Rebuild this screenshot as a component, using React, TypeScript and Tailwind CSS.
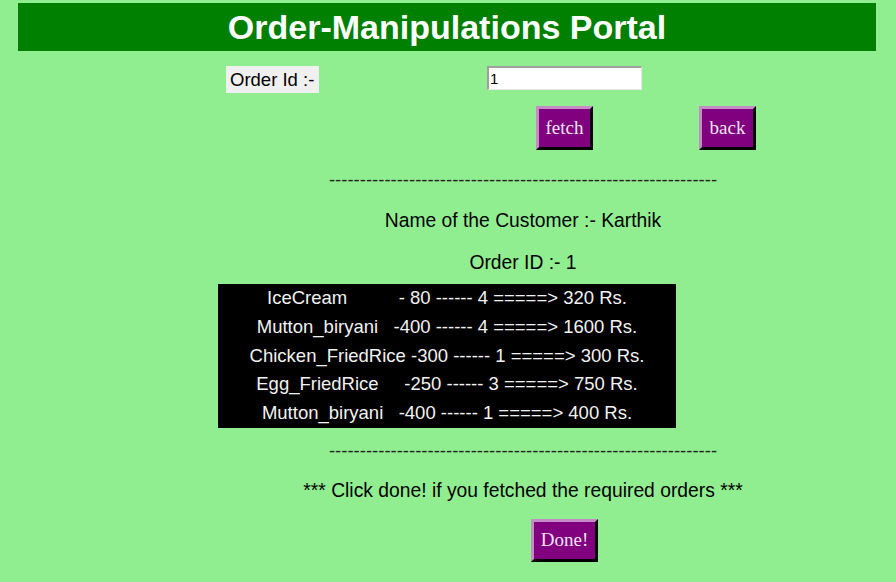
const rows = [
  "IceCream          - 80 ------ 4 =====> 320 Rs.",
  "Mutton_biryani   -400 ------ 4 =====> 1600 Rs.",
  "Chicken_FriedRice -300 ------ 1 =====> 300 Rs.",
  "Egg_FriedRice     -250 ------ 3 =====> 750 Rs.",
  "Mutton_biryani   -400 ------ 1 =====> 400 Rs.",
];

const dashes = "-".repeat(63);

function PurpleButton({ label, width }: { label: string; width: string }) {
  return (
    <button
      className={`${width} h-[44px] bg-[#800080] text-[#f4e6f4] text-[19px] border-[3px] border-t-[#c58cc5] border-l-[#c58cc5] border-r-black border-b-black`}
      style={{ fontFamily: '"Liberation Serif", serif' }}
    >
      {label}
    </button>
  );
}

export default function App() {
  return (
    <div
      className="w-[896px] h-[582px] bg-[#90ee90] overflow-hidden text-black pt-[3px]"
      style={{ fontFamily: '"Liberation Sans", Arial, sans-serif' }}
    >
      <div className="ml-[18px] mr-[20px] h-[48px] bg-[#008000] flex items-center justify-center">
        <h1 className="text-white font-bold text-[34px] leading-none">Order-Manipulations Portal</h1>
      </div>

      <div className="flex items-start mt-[15px]">
        <div className="ml-[226px] w-[93px] h-[27px] bg-[#f0f0f0] flex items-center pl-[4px] text-[18.5px]">
          Order Id :-
        </div>
        <input
          defaultValue="1"
          className="ml-[168px] w-[155px] h-[24px] bg-white border-t-2 border-l-2 border-t-[#a0a0a0] border-l-[#a0a0a0] border-r border-b border-r-[#e6e6e6] border-b-[#e6e6e6] px-[1px] text-[15px] outline-none"
        />
      </div>

      <div className="flex mt-[13px]">
        <div className="ml-[536px]">
          <PurpleButton label="fetch" width="w-[57px]" />
        </div>
        <div className="ml-[106px]">
          <PurpleButton label="back" width="w-[57px]" />
        </div>
      </div>

      <div className="pl-[150px] flex flex-col items-center">
        <div className="mt-[20px] h-[20px] leading-[20px] text-[18.5px] text-[#222]">{dashes}</div>
        <div className="mt-[18px] h-[26px] leading-[26px] text-[19.3px]">Name of the Customer :- Karthik</div>
        <div className="mt-[16px] h-[26px] leading-[26px] text-[19.3px]">Order ID :- 1</div>
      </div>

      <div className="mt-[8px] ml-[218px] w-[458px] h-[144px] bg-black text-[#f2f2f2] text-[18.5px]">
        {rows.map((r, i) => (
          <div key={i} className="h-[28.8px] leading-[28.8px] text-center whitespace-pre">
            {r}
          </div>
        ))}
      </div>

      <div className="pl-[150px] flex flex-col items-center">
        <div className="mt-[13px] h-[20px] leading-[20px] text-[18.5px] text-[#222]">{dashes}</div>
        <div className="mt-[17px] h-[26px] leading-[26px] text-[19.3px]">
          *** Click done! if you fetched the required orders ***
        </div>
      </div>

      <div className="mt-[15px] ml-[531px]">
        <button
          className="w-[67px] h-[43px] bg-[#800080] text-[#f4e6f4] text-[19px] border-[3px] border-t-[#c58cc5] border-l-[#c58cc5] border-r-black border-b-black"
          style={{ fontFamily: '"Liberation Serif", serif' }}
        >
          Done!
        </button>
      </div>
    </div>
  );
}
